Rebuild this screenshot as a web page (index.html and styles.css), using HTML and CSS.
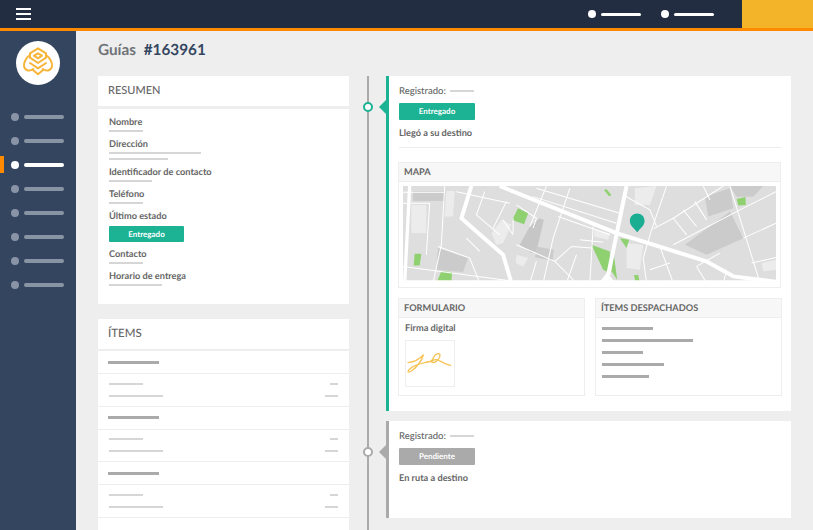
FILE: index.html
```html
<!DOCTYPE html>
<html lang="es">
<head>
  <meta charset="UTF-8" />
  <title>Guías #163961</title>
  <link rel="stylesheet" href="styles.css">
</head>
<body>

<header class="topbar">
  <div class="hamburger"><span></span><span></span><span></span></div>
  <div class="top-links">
    <div class="top-link"><i></i><b></b></div>
    <div class="top-link"><i></i><b></b></div>
  </div>
  <div class="top-action"></div>
</header>

<div class="main-wrapper">
  <nav class="sidebar">
    <div class="logo">
      <svg viewBox="0 0 132 132" width="44" height="44" fill="none" stroke="#f7b53a" stroke-width="6" stroke-linejoin="round" stroke-linecap="round">
        <path d="M66 22L90 37V50L66 66L42 50V37Z"/>
        <path d="M66 37L78 44L66 52L54 44Z"/>
        <path d="M42 42C30 50 22 66 24 76C27 90 42 92 52 84"/>
        <path d="M90 42C102 50 110 66 108 76C105 90 90 92 80 84"/>
        <path d="M42 66L66 82L90 66"/>
        <path d="M50 86L66 100L82 86"/>
      </svg>
    </div>
    <ul class="menu">
      <li><i></i><b></b></li>
      <li><i></i><b></b></li>
      <li class="active"><i></i><b></b></li>
      <li><i></i><b></b></li>
      <li><i></i><b></b></li>
      <li><i></i><b></b></li>
      <li><i></i><b></b></li>
      <li><i></i><b></b></li>
    </ul>
  </nav>

  <main class="content">
    <h1 class="page-title">Guías <span>#163961</span></h1>

    <div class="columns">
      <div class="col-left">
        <section class="card-head">RESUMEN</section>
        <section class="resumen">
          <div class="label">Nombre</div>
          <div class="line w34"></div>
          <div class="label">Dirección</div>
          <div class="line w92 close"></div>
          <div class="line w59 close2"></div>
          <div class="label">Identificador de contacto</div>
          <div class="line w43"></div>
          <div class="label">Teléfono</div>
          <div class="line w34"></div>
          <div class="label">Último estado</div>
          <div class="badge badge-ok resumen-badge">Entregado</div>
          <div class="label">Contacto</div>
          <div class="line w34"></div>
          <div class="label">Horario de entrega</div>
          <div class="line w53"></div>
        </section>

        <section class="card-head items-head">ÍTEMS</section>
        <section class="items">
          <div class="item-title"><b></b></div>
          <div class="item-row">
            <div><span class="w34"></span><em class="short"></em></div>
            <div><span class="w54"></span><em></em></div>
          </div>
          <div class="item-title"><b></b></div>
          <div class="item-row">
            <div><span class="w34"></span><em class="short"></em></div>
            <div><span class="w54"></span><em></em></div>
          </div>
          <div class="item-title"><b></b></div>
          <div class="item-row">
            <div><span class="w34"></span><em class="short"></em></div>
            <div><span class="w54"></span><em></em></div>
          </div>
        </section>
      </div>

      <div class="timeline">
        <article class="event event-ok">
          <div class="event-dot"></div>
          <div class="event-info">
            <div class="registered">Registrado: <span></span></div>
            <div class="badge badge-ok">Entregado</div>
            <div class="event-text">Llegó a su destino</div>
          </div>
          <hr class="divider">

          <div class="panel panel-map">
            <div class="panel-head">MAPA</div>
            <div class="map">
              <svg viewBox="40 93 1118 292" width="373" height="97" preserveAspectRatio="none">
                <rect x="40" y="93" width="1118" height="292" fill="#dedede"/>
                <g fill="#cbcbcb">
                  <path d="M70 108H165V138H70Z"/>
                  <path d="M390 270L420 215L450 190L462 195L440 290L425 295Z" fill="#c6c6c6"/>
                  <path d="M440 275L492 285L488 317L436 308Z"/>
                  <path d="M145 280L235 310L220 352L140 345Z"/>
                  <path d="M1020 93H1120L1090 125L1040 125Z"/>
                  <path d="M945 125L1020 100L1030 160L955 185Z"/>
                  <path d="M885 270L1020 170L1060 250L950 300Z"/>
                </g>
                <g fill="#ececec">
                  <path d="M65 150H110V235H65Z"/>
                  <path d="M305 235L335 195L365 210L340 265L320 270Z"/>
                  <path d="M735 100L800 93L780 150H735Z"/>
                  <path d="M710 265L760 270L750 345L710 340Z"/>
                  <path d="M1115 325L1158 315V345L1120 350Z"/>
                  <path d="M380 300L415 310L400 335L378 325Z"/>
                  <path d="M170 108H195L190 185H165Z"/>
                  <path d="M615 225L660 235L655 255L612 245Z"/>
                </g>
                <g fill="#8fd170">
                  <path d="M385 160L415 175L403 208L367 195Z"/>
                  <path d="M605 270L660 290L660 355L640 345Z"/>
                  <path d="M672 300L682 375L665 350Z"/>
                  <path d="M690 250L718 255L710 280Z"/>
                  <path d="M75 297H95L90 332H72Z"/>
                  <path d="M155 350L187 352L185 385H140Z"/>
                  <path d="M732 362L745 360L750 385H738Z"/>
                  <path d="M642 105L650 103L665 120L658 124Z"/>
                  <path d="M1040 132L1066 126L1068 150L1045 152Z"/>
                </g>
                <g fill="none" stroke="#fff" stroke-width="3">
                  <path d="M40 112H165M40 145H120L110 300M165 93L155 270L130 385"/>
                  <path d="M40 335L360 378"/>
                  <path d="M145 275L240 310L270 385"/>
                  <path d="M285 110L260 180L330 240M350 140L310 220"/>
                  <path d="M200 110L360 145M470 93L420 215M540 100L490 250L460 385"/>
                  <path d="M380 150L440 190L430 220M380 270L495 320L560 385M495 320L545 275L605 280"/>
                  <path d="M440 100L690 175M430 125L680 205M505 185L660 240M610 215L600 385"/>
                  <path d="M440 320L420 385M560 300L530 385M570 255L640 262"/>
                  <path d="M830 93L785 225L760 310L770 385M780 345L840 325"/>
                  <path d="M940 93L960 135M1000 93L850 190L790 222M850 190L890 240M880 165L920 215M915 140L950 195"/>
                  <path d="M850 270L1050 165L1158 110M1020 93L1110 385M1060 250L1158 205"/>
                  <path d="M810 275L850 385M920 335L950 385M920 335L990 295M1010 345L1000 385M1085 325L1158 308"/>
                  <path d="M230 250L270 290M340 195L370 240M370 190V235"/>
                  <path d="M700 120L780 165L800 215"/>
                </g>
                <g fill="none" stroke="#fff" stroke-linejoin="round">
                  <path d="M330 93L680 235L950 320L1030 365L1158 381" stroke-width="12"/>
                  <path d="M710 93L650 385" stroke-width="12"/>
                  <path d="M245 93L215 190L340 300L365 385" stroke-width="12"/>
                  <path d="M60 93L45 385" stroke-width="10"/>
                  <path d="M632 385L652 360L672 385" stroke-width="8"/>
                  <path d="M40 381H1158" stroke-width="8"/>
                </g>
                <path d="M742 232C732 218 720 212 720 198C720 185 730 176 742 176C754 176 764 185 764 198C764 212 752 218 742 232Z" fill="#19ad92"/>
              </svg>
            </div>
          </div>

          <div class="panels">
            <div class="panel">
              <div class="panel-head">FORMULARIO</div>
              <div class="form-body">
                <div class="firma-label">Firma digital</div>
                <div class="firma">
                  <svg viewBox="3 0 150 141" width="50" height="47" fill="none" stroke="#f6c354" stroke-width="4" stroke-linecap="round" stroke-linejoin="round">
                    <path d="M12 68C28 66 46 58 58 45C54 62 36 84 22 93C12 99 8 96 18 86C30 74 52 70 70 66"/>
                    <path d="M70 66C78 66 86 60 90 50C94 42 104 38 108 44C110 54 96 68 86 68C76 66 90 56 102 60C114 66 126 74 140 76"/>
                  </svg>
                </div>
              </div>
            </div>
            <div class="panel">
              <div class="panel-head">ÍTEMS DESPACHADOS</div>
              <div class="dispatched">
                <b class="d51"></b>
                <b class="d91"></b>
                <b class="d41"></b>
                <b class="d62"></b>
                <b class="d47"></b>
              </div>
            </div>
          </div>
        </article>

        <article class="event event-pending">
          <div class="event-dot"></div>
          <div class="event-info">
            <div class="registered">Registrado: <span></span></div>
            <div class="badge badge-pending">Pendiente</div>
            <div class="event-text">En ruta a destino</div>
          </div>
        </article>
      </div>
    </div>
  </main>
</div>

</body>
</html>
```

FILE: styles.css
```css
* { box-sizing: border-box; }

body {
  margin: 0;
  height: 530px;
  overflow: hidden;
  font-family: Lato, 'Open Sans', sans-serif;
  text-rendering: geometricPrecision;
  background-color: #eeeeee;
  color: #666;
}

/* barra superior */
.topbar {
  display: flex;
  align-items: center;
  height: 31px;
  background-color: #222d41;
  border-bottom: 3px solid #ff8a00;
}

.hamburger {
  display: flex;
  flex-direction: column;
  gap: 3px;
  width: 15px;
  margin-left: 16px;
}

.hamburger span {
  height: 2px;
  background-color: #fff;
}

.top-links {
  display: flex;
  gap: 20px;
  margin-left: auto;
  margin-right: 28px;
}

.top-link {
  display: flex;
  align-items: center;
  gap: 5px;
}

.top-link i {
  width: 8px;
  height: 8px;
  border-radius: 50%;
  background-color: #fff;
}

.top-link b {
  width: 40px;
  height: 3px;
  border-radius: 2px;
  background-color: #fff;
}

.top-action {
  width: 71px;
  height: 28px;
  background-color: #f4b42a;
}

.main-wrapper {
  display: flex;
  height: 499px;
}

/* menu lateral */
.sidebar {
  flex: 0 0 76px;
  background-color: #34465f;
  padding-top: 10px;
}

.logo {
  display: flex;
  width: 44px;
  height: 44px;
  margin-left: 16px;
  border-radius: 50%;
  background-color: #fff;
}

.menu {
  list-style: none;
  margin: 20px 0 0;
  padding: 0;
}

.menu li {
  display: flex;
  align-items: center;
  gap: 5px;
  height: 24px;
  padding-left: 11px;
  position: relative;
}

.menu i {
  width: 8px;
  height: 8px;
  border-radius: 50%;
  background-color: #8894a6;
}

.menu b {
  width: 40px;
  height: 4px;
  border-radius: 2px;
  background-color: #8894a6;
}

.menu .active i,
.menu .active b {
  background-color: #fff;
}

.menu .active::before {
  content: '';
  position: absolute;
  left: 0;
  top: 3px;
  width: 4px;
  height: 17px;
  background-color: #ff8a00;
}

/* contenido */
.content {
  flex: 1;
  padding: 0 22px 0 22px;
  overflow: hidden;
}

.page-title {
  margin: 0;
  height: 45px;
  padding-top: 9px;
  font-size: 15.3px;
  line-height: 20px;
  font-weight: 700;
  color: #6f7378;
}

.page-title span {
  margin-left: 4px;
  color: #34465f;
}

.columns {
  display: flex;
}

.col-left {
  flex: 0 0 251px;
  margin-right: 37px;
}

.card-head {
  height: 30px;
  margin-bottom: 3px;
  padding-left: 10px;
  font-size: 11px;
  line-height: 30px;
  font-weight: 500;
  color: #666;
  background-color: #fff;
}

.resumen {
  height: 195px;
  padding: 5px 11px 0;
  background-color: #fff;
}

.label {
  height: 15px;
  font-size: 9.2px;
  line-height: 15px;
  font-weight: 700;
  color: #666;
}

.line {
  height: 2px;
  margin: 1px 0 4px;
  background-color: #d6d6d6;
}

.w34 { width: 34px; }
.w43 { width: 43px; }
.w53 { width: 53px; }
.w54 { width: 54px; }
.w59 { width: 59px; }
.w92 { width: 92px; }

.badge {
  width: 76px;
  height: 17px;
  font-size: 8px;
  line-height: 17px;
  font-weight: 700;
  text-align: center;
  color: #fff;
  border-radius: 1px;
}

.badge-ok { background-color: #1cb394; }
.badge-pending { background-color: #aaaaaa; }

.resumen-badge {
  width: 75px;
  height: 16px;
  line-height: 16px;
  margin: 3px 0 4px;
}

.items-head {
  margin-top: 15px;
  margin-bottom: 2px;
  font-size: 11.5px;
}

.items {
  background-color: #fff;
  height: 200px;
}

.item-title {
  display: flex;
  align-items: center;
  height: 23px;
  padding: 0 10px;
  border-bottom: 1px solid #eeeeee;
}

.item-title b {
  width: 51px;
  height: 3px;
  background-color: #aaaaaa;
}

.item-row {
  display: flex;
  flex-direction: column;
  justify-content: center;
  gap: 10px;
  height: 32.67px;
  padding: 0 11px;
  border-bottom: 1px solid #eeeeee;
}

.item-row div {
  display: flex;
  justify-content: space-between;
}

.item-row span,
.item-row em {
  height: 2px;
  background-color: #d6d6d6;
}

.item-row em { width: 13px; }
.item-row em.short { width: 8px; }

/* linea de tiempo */
.timeline {
  flex: 0 0 405px;
  position: relative;
}

.timeline::before {
  content: '';
  position: absolute;
  left: -19px;
  top: 0;
  width: 2px;
  height: 460px;
  background-color: #aaaaaa;
}

.event {
  position: relative;
  padding: 8px 10px 14px 10px;
  background-color: #fff;
  border-left: 3px solid #1cb394;
}

.event-ok {
  height: 335px;
  margin-bottom: 10px;
}

.event-pending {
  height: 97px;
  border-left-color: #aaaaaa;
}

/* flecha hacia la linea */
.event::before {
  content: '';
  position: absolute;
  left: -10px;
  top: 24px;
  border-style: solid;
  border-width: 7px 7px 7px 0;
  border-color: transparent #1cb394 transparent transparent;
}

.event-pending::before { border-right-color: #aaaaaa; }

.event-dot {
  position: absolute;
  left: -26px;
  top: 26px;
  width: 10px;
  height: 10px;
  border: 2px solid #1cb394;
  border-radius: 50%;
  background-color: #fff;
}

.event-pending .event-dot { border-color: #aaaaaa; }

.registered {
  display: flex;
  align-items: center;
  gap: 4px;
  height: 14px;
  font-size: 9.5px;
  font-weight: 500;
}

.registered span {
  width: 24px;
  height: 2px;
  background-color: #d6d6d6;
}

.event-info .badge { margin-top: 5px; }

.event-text {
  margin-top: 6px;
  font-size: 9.2px;
  line-height: 14px;
  font-weight: 700;
}

.divider {
  height: 1px;
  margin: 7px 0 14px;
  border: none;
  background-color: #eeeeee;
}

.panel {
  border: 1px solid #eeeeee;
  background-color: #fff;
}

.panel-map { margin-left: -1px; }

.panel-head {
  height: 19px;
  padding-left: 5px;
  font-size: 9.2px;
  line-height: 18px;
  font-weight: 700;
  color: #666;
  background-color: #f7f7f7;
  border-bottom: 1px solid #eeeeee;
}

.map {
  display: flex;
  padding: 4px;
}

.panels {
  display: flex;
  gap: 10px;
  margin: 10px -1px 0 -1px;
}

.panels .panel {
  flex: 1;
  height: 98px;
}

.form-body { padding: 3px 6px; }

.firma-label {
  height: 14px;
  font-size: 9.2px;
  line-height: 14px;
  font-weight: 700;
}

.firma {
  display: flex;
  width: 50px;
  height: 47px;
  margin-top: 5px;
  border: 1px solid #eeeeee;
}

.firma svg { margin: -1px; }

.dispatched {
  display: flex;
  flex-direction: column;
  gap: 9px;
  padding: 9px 6px;
}

.dispatched b {
  height: 3px;
  background-color: #aaaaaa;
}

.d51 { width: 51px; }
.d91 { width: 91px; }
.d41 { width: 41px; }
.d62 { width: 62px; }
.d47 { width: 47px; }
```
